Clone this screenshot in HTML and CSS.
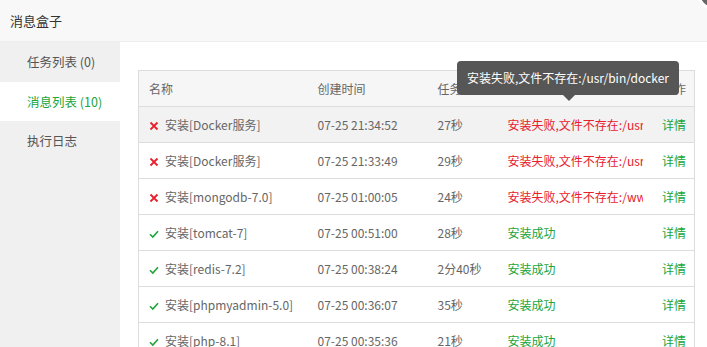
FILE: index.html
```html
<!DOCTYPE html>
<html lang="zh-CN">
<head>
<meta charset="utf-8">
<title>消息盒子</title>
<link rel="stylesheet" href="styles.css">
</head>
<body>
<div class="layer">
  <div class="layer-title">消息盒子</div>
  <span class="layer-close"></span>
  <div class="layer-body">
    <ul class="side-tabs">
      <li class="tab">任务列表 (0)</li>
      <li class="tab active">消息列表 (10)</li>
      <li class="tab">执行日志</li>
    </ul>
    <div class="main">
      <table class="msg-table">
        <colgroup>
          <col class="c-name"><col class="c-time"><col class="c-dur"><col class="c-status"><col class="c-op">
        </colgroup>
        <thead>
          <tr><th>名称</th><th>创建时间</th><th>任务耗时</th><th>状态</th><th class="op">操作</th></tr>
        </thead>
        <tbody>
          <tr class="hover">
            <td><svg class="ico" viewBox="0 0 10 10"><path d="M1.5 1.5L8.5 8.5M8.5 1.5L1.5 8.5" stroke="#e8202c" stroke-width="1.8" fill="none"/></svg>安装[Docker服务]</td>
            <td>07-25 21:34:52</td><td>27秒</td>
            <td class="status fail"><div class="clip">安装失败,文件不存在:/usr/bin/docker</div></td>
            <td class="op"><a>详情</a></td>
          </tr>
          <tr>
            <td><svg class="ico" viewBox="0 0 10 10"><path d="M1.5 1.5L8.5 8.5M8.5 1.5L1.5 8.5" stroke="#e8202c" stroke-width="1.8" fill="none"/></svg>安装[Docker服务]</td>
            <td>07-25 21:33:49</td><td>29秒</td>
            <td class="status fail"><div class="clip">安装失败,文件不存在:/usr/bin/docker</div></td>
            <td class="op"><a>详情</a></td>
          </tr>
          <tr>
            <td><svg class="ico" viewBox="0 0 10 10"><path d="M1.5 1.5L8.5 8.5M8.5 1.5L1.5 8.5" stroke="#e8202c" stroke-width="1.8" fill="none"/></svg>安装[mongodb-7.0]</td>
            <td>07-25 01:00:05</td><td>24秒</td>
            <td class="status fail"><div class="clip">安装失败,文件不存在:/www/server/mongodb</div></td>
            <td class="op"><a>详情</a></td>
          </tr>
          <tr>
            <td><svg class="ico" viewBox="0 0 10 10"><path d="M1 5.2L3.8 8L9 2.2" stroke="#20a53a" stroke-width="1.6" fill="none"/></svg>安装[tomcat-7]</td>
            <td>07-25 00:51:00</td><td>28秒</td>
            <td class="status ok"><div class="clip">安装成功</div></td>
            <td class="op"><a>详情</a></td>
          </tr>
          <tr>
            <td><svg class="ico" viewBox="0 0 10 10"><path d="M1 5.2L3.8 8L9 2.2" stroke="#20a53a" stroke-width="1.6" fill="none"/></svg>安装[redis-7.2]</td>
            <td>07-25 00:38:24</td><td>2分40秒</td>
            <td class="status ok"><div class="clip">安装成功</div></td>
            <td class="op"><a>详情</a></td>
          </tr>
          <tr>
            <td><svg class="ico" viewBox="0 0 10 10"><path d="M1 5.2L3.8 8L9 2.2" stroke="#20a53a" stroke-width="1.6" fill="none"/></svg>安装[phpmyadmin-5.0]</td>
            <td>07-25 00:36:07</td><td>35秒</td>
            <td class="status ok"><div class="clip">安装成功</div></td>
            <td class="op"><a>详情</a></td>
          </tr>
          <tr>
            <td><svg class="ico" viewBox="0 0 10 10"><path d="M1 5.2L3.8 8L9 2.2" stroke="#20a53a" stroke-width="1.6" fill="none"/></svg>安装[php-8.1]</td>
            <td>07-25 00:35:36</td><td>21秒</td>
            <td class="status ok"><div class="clip">安装成功</div></td>
            <td class="op"><a>详情</a></td>
          </tr>
        </tbody>
      </table>
      <div class="tooltip">安装失败,文件不存在:/usr/bin/docker</div>
    </div>
  </div>
</div>
</body>
</html>
```

FILE: styles.css
```css
* { box-sizing: border-box; }
html, body { margin: 0; padding: 0; }
body {
  width: 707px;
  height: 347px;
  overflow: hidden;
  font-family: "Noto Sans CJK SC", "Noto Sans", sans-serif;
  font-size: 12px;
  color: #666;
  background: #fff;
}
.layer { position: relative; width: 707px; height: 347px; }
.layer-title {
  height: 42px;
  line-height: 42px;
  padding-left: 10px;
  font-size: 13px;
  color: #333;
  background: #f8f8f8;
  border-bottom: 1px solid #eee;
}
.layer-close {
  position: absolute;
  left: 697px;
  top: -24px;
  width: 34px;
  height: 34px;
  border-radius: 50%;
  background: #666;
  border: 3px solid #fff;
}
.layer-body { display: flex; height: 305px; }
.side-tabs {
  list-style: none;
  margin: 0;
  padding: 0;
  width: 120px;
  flex: none;
  background: #f0f0f0;
}
.tab {
  height: 39.5px;
  line-height: 39px;
  padding-left: 27px;
  font-size: 12.5px;
  color: #555;
}
.tab.active { background: #fff; color: #20a53a; }
.main { position: relative; flex: 1; padding: 28px 13px 0 18px; }
.msg-table {
  width: 556px;
  table-layout: fixed;
  border-collapse: collapse;
  border: 1px solid #ddd;
}
.c-name { width: 169px; }
.c-time { width: 120px; }
.c-dur { width: 70px; }
.c-status { width: 155px; }
.c-op { width: 42px; }
.msg-table th, .msg-table td {
  height: 36px;
  padding: 0 0 0 10px;
  text-align: left;
  font-weight: normal;
  white-space: nowrap;
  overflow: hidden;
  border-bottom: 1px solid #ddd;
}
.msg-table thead th { background: #f6f6f6; color: #666; }
.msg-table tr.hover td { background: #f2f2f2; }
.msg-table .op { text-align: right; padding: 0 8px 0 0; }
.op a { color: #20a53a; }
.ico { width: 10px; height: 10px; margin-right: 6px; vertical-align: -1px; }
.clip { width: 135px; overflow: hidden; white-space: nowrap; }
.fail { color: #e8202c; }
.ok { color: #20a53a; }
.tooltip {
  position: absolute;
  left: 337px;
  top: 19px;
  height: 34px;
  line-height: 34px;
  padding: 0 10px;
  background: #565656;
  color: #fff;
  border-radius: 4px;
  font-size: 12px;
  white-space: nowrap;
}
.tooltip::after {
  content: "";
  position: absolute;
  left: 106px;
  bottom: -6px;
  border-left: 6px solid transparent;
  border-right: 6px solid transparent;
  border-top: 6px solid #565656;
}
```
